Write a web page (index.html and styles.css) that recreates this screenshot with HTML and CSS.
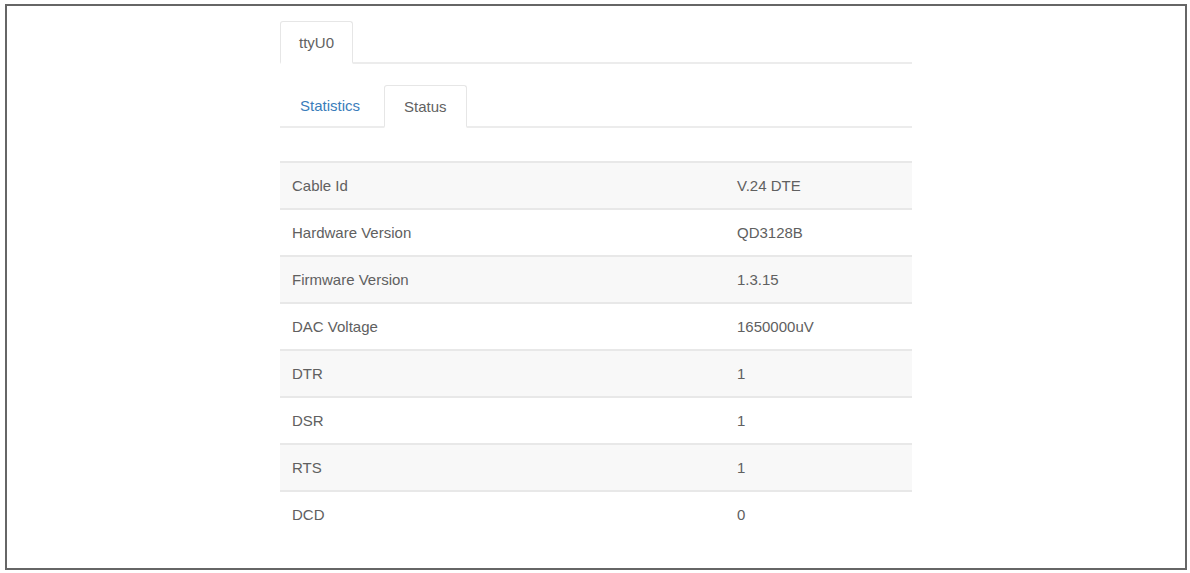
FILE: index.html
```html
<!DOCTYPE html>
<html>
<head>
<meta charset="utf-8">
<link rel="stylesheet" href="styles.css">
</head>
<body>
<div class="frame">
  <div class="panel">
    <ul class="tabs tabs-top">
      <li class="tab active">ttyU0</li>
    </ul>
    <ul class="tabs tabs-sub">
      <li class="tab link">Statistics</li>
      <li class="tab active">Status</li>
    </ul>
    <table class="status">
      <tr><td class="key">Cable Id</td><td>V.24 DTE</td></tr>
      <tr><td class="key">Hardware Version</td><td>QD3128B</td></tr>
      <tr><td class="key">Firmware Version</td><td>1.3.15</td></tr>
      <tr><td class="key">DAC Voltage</td><td>1650000uV</td></tr>
      <tr><td class="key">DTR</td><td>1</td></tr>
      <tr><td class="key">DSR</td><td>1</td></tr>
      <tr><td class="key">RTS</td><td>1</td></tr>
      <tr><td class="key">DCD</td><td>0</td></tr>
    </table>
  </div>
</div>
</body>
</html>
```
FILE: styles.css
```css
html, body {
  margin: 0;
  padding: 0;
  background: #ffffff;
}
body {
  font-family: "Liberation Sans", Arial, sans-serif;
  font-size: 15px;
  color: #606060;
}
.frame {
  margin: 4px 3px 0 5px;
  height: 566px;
  border: 2px solid #666666;
  box-sizing: border-box;
  padding-top: 15px;
}
.panel {
  width: 632px;
  margin-left: 273px;
}
.tabs {
  list-style: none;
  margin: 0;
  padding: 0;
  display: flex;
  border-bottom: 2px solid #ececec;
}
.tabs-top {
  height: 41px;
}
.tabs-sub {
  margin-top: 21px;
  height: 41px;
}
.tab {
  padding: 0 19px;
  line-height: 40px;
  margin-right: 3px;
  margin-bottom: -2px;
  border: 1px solid transparent;
  border-bottom: none;
  border-radius: 3px 3px 0 0;
}
.tabs-top .tab {
  padding: 0 18px;
}
.tab.active {
  background: #ffffff;
  border-color: #e6e6e6;
  border-bottom: 2px solid #ffffff;
  line-height: 41px;
  color: #626262;
}
.tab.link {
  color: #3a7dbb;
  padding: 0 19px;
  margin-right: 4px;
}
.status {
  margin-top: 33px;
  width: 100%;
  border-collapse: collapse;
  border-top: 2px solid #e8e8e8;
}
.status td {
  padding: 14px 12px 13px;
  line-height: 18px;
  border-bottom: 2px solid #e8e8e8;
}
.status tr:last-child td {
  border-bottom: none;
}
.status tr:nth-child(odd) td {
  background: #f8f8f8;
}
.status .key {
  width: 421px;
}
```
